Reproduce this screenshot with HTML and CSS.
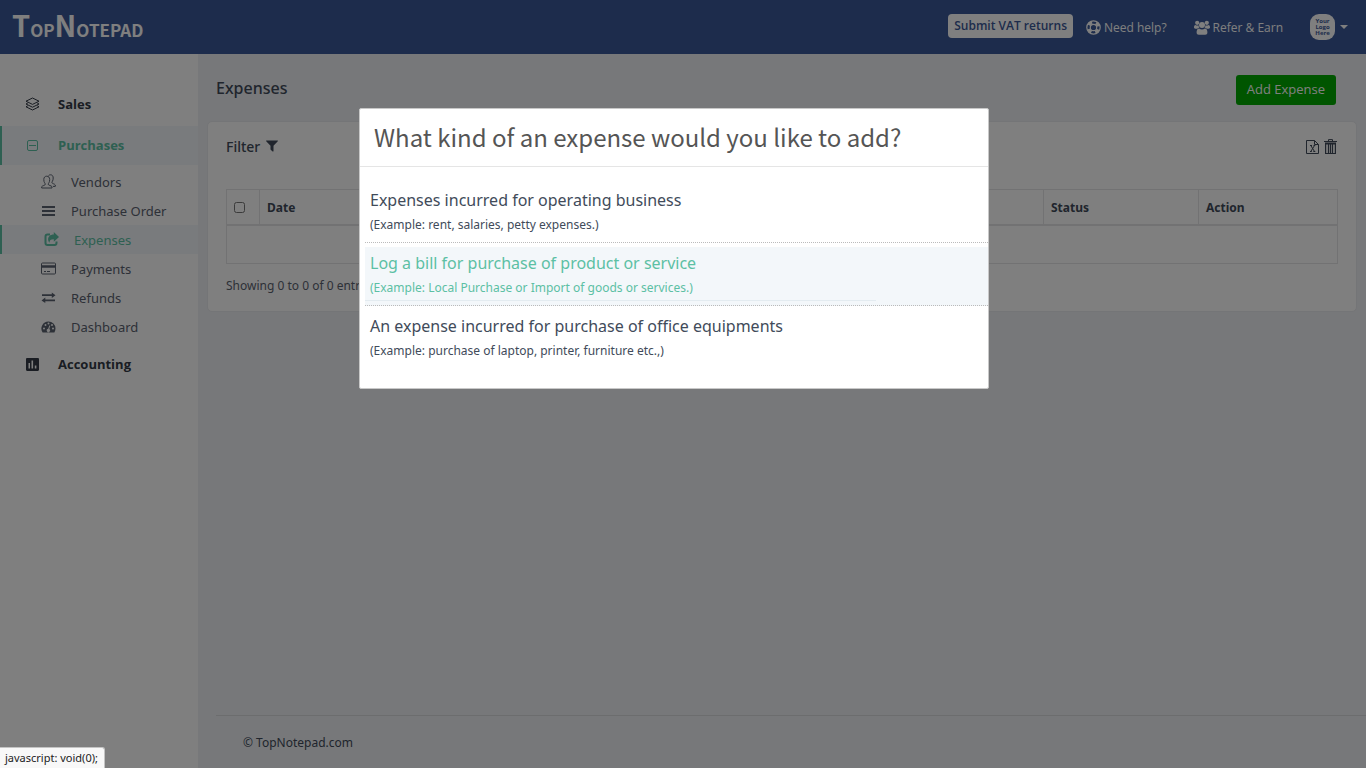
FILE: index.html
```
<!DOCTYPE html>
<html lang="en">
<head>
  <meta charset="UTF-8" />
  <meta name="viewport" content="width=device-width, initial-scale=1.0"/>
  <title>TopNotepad - Expenses</title>
  <link rel="stylesheet" href="styles.css">
</head>
<body>
  <header class="topbar">
    <a href="#" class="logo"><span class="big">T</span>OP<span class="big">N</span>OTEPAD</a>
    <nav class="topnav">
      <button class="btn-vat">Submit VAT returns</button>
      <a href="#" class="help">
        <svg width="15" height="15" viewBox="0 0 15 15" fill="none" stroke="currentColor"><circle cx="7.5" cy="7.5" r="6.7" stroke-width="1.2"/><circle cx="7.5" cy="7.5" r="3.2" stroke-width="1.2"/><circle cx="7.5" cy="7.5" r="5" stroke-width="3.4" stroke-dasharray="3.9 3.95" stroke-dashoffset="5.9"/></svg>
        Need help?</a>
      <a href="#" class="refer">
        <svg width="16" height="15" viewBox="0 0 16 15" fill="currentColor"><circle cx="3.2" cy="2.8" r="2.1"/><circle cx="12.8" cy="2.8" r="2.1"/><circle cx="8" cy="4.9" r="3"/><path d="M0 7.6C0 6 .5 5 1.4 5c.8.6 2.2.8 3.1.3.1 1 .3 1.7.9 2.4-1 0-1.7.4-2.2 1H1.4C.5 8.700 0 8.300 0 7.600zM16 7.600C16 6 15.500 5 14.600 5c-.8.6-2.200.8-3.100.3-.1 1-.3 1.700-.9 2.400 1 0 1.700.4 2.200 1h1.800c.9 0 1.400-.4 1.400-1.100zM2.600 12.600c0-2.500.6-4.200 2.500-4.200 1.700 1.400 4.100 1.400 5.800 0 1.900 0 2.500 1.700 2.500 4.200 0 1.500-.9 2.200-2.200 2.200H4.800c-1.300 0-2.200-.7-2.200-2.200z"/></svg>
        Refer &amp; Earn</a>
      <button class="profile" aria-label="Account">
        <span class="avatar">Your<br>Logo<br>Here</span>
        <span class="caret"></span>
      </button>
    </nav>
  </header>

  <div class="layout">
    <aside class="sidebar">
      <a href="#" class="menu-item">
        <svg width="15" height="15" viewBox="0 0 15 15" fill="none" stroke="currentColor"><path d="M7.500 1 14 4.200 7.500 7.400 1 4.200zM2.800 6 1 7l6.500 3.200L14 7l-1.800-1M2.800 8.800 1 9.800 7.500 13 14 9.800l-1.800-1"/></svg>
        Sales</a>
      <a href="#" class="menu-item active">
        <svg width="15" height="15" viewBox="0 0 15 15" fill="none" stroke="currentColor"><rect x="2.500" y="2.500" width="10" height="10" rx="1.500"/><path d="M4 7.500h7"/></svg>
        Purchases</a>
      <div class="submenu">
        <a href="#">
          <svg width="15" height="15" viewBox="0 0 15 15" fill="none" stroke="currentColor"><path d="M.7 14v-1.300c.7-1.200 3.600-1.200 3.600-2.500 0-.9-1.500-1.500-1.500-4.700 0-2 1-3.300 2.900-3.300s3 1.300 3 3.300c0 3.200-1.500 3.800-1.500 4.700 0 1.300 3.200 1.300 3.800 2.500V14zM7.500 1.700c.5-.6 1.200-.9 2-.9 1.800 0 2.700 1.300 2.700 3.200 0 3-1.300 3.600-1.300 4.500 0 1.200 2.900 1.300 3.400 2.500v1.400H12"/></svg>
          Vendors</a>
        <a href="#">
          <svg width="15" height="15" viewBox="0 0 15 15" fill="currentColor"><path d="M1 3h13v2H1zM1 7h13v2H1zM1 11h13v2H1z"/></svg>
          Purchase Order</a>
        <a href="#" class="active">
          <svg width="15" height="15" viewBox="0 0 15 15" fill="none" stroke="currentColor" stroke-width="2"><path d="M6 2.500H3.500c-1.300 0-2 .8-2 2v6.500c0 1.300.7 2 2 2h7c1.300 0 2-.7 2-2V9.500"/><path d="M9.800 0v2.400C6 2.400 4.100 4.600 4.100 7.300c0 1.500.6 2.600 1.500 3.500-.2-2.500.9-3.600 4.200-3.600v2.500L15 4.900z" fill="currentColor" stroke="none"/></svg>
          Expenses</a>
        <a href="#">
          <svg width="15" height="15" viewBox="0 0 15 15" fill="none" stroke="currentColor"><rect x=".5" y="2" width="14" height="11" rx="1"/><path d="M1 5.500h13" stroke-width="2.500"/><path d="M3 10.500h2m1 0h3"/></svg>
          Payments</a>
        <a href="#">
          <svg width="15" height="15" viewBox="0 0 15 15" fill="currentColor"><path d="M1 4.200h9.800V2.400l3.700 2.800-3.700 2.700V6.100H1zM14 11.300H4.300v1.800L.5 10.400l3.800-2.800v1.900H14z"/></svg>
          Refunds</a>
        <a href="#">
          <svg width="15" height="15" viewBox="0 0 15 15" fill="currentColor"><path fill-rule="evenodd" d="M7.500 2.500a7 7 0 0 1 7 7c0 1.500-.4 2.700-1.100 3.900H1.600A7 7 0 0 1 7.500 2.500zM2 9.500a1 1 0 1 0 2 0 1 1 0 1 0-2 0M3.500 6a1 1 0 1 0 2 0 1 1 0 1 0-2 0M6.500 4.500a1 1 0 1 0 2 0 1 1 0 1 0-2 0M10 6a1 1 0 1 0 2 0 1 1 0 1 0-2 0M11 9.500a1 1 0 1 0 2 0 1 1 0 1 0-2 0M8.300 6.400l-1.100 3.400a1.600 1.600 0 1 0 1.100.3l1-3.500z"/></svg>
          Dashboard</a>
      </div>
      <a href="#" class="menu-item">
        <svg width="15" height="15" viewBox="0 0 15 15" fill="currentColor"><path fill-rule="evenodd" d="M2.200 1h10.600c.7 0 1.200.5 1.200 1.200v10.600c0 .7-.5 1.200-1.200 1.200H2.200c-.7 0-1.200-.5-1.200-1.200V2.200C1 1.500 1.500 1 2.200 1zM3.500 6v5.500H5V6zM6.500 3.500v8h1.600v-8zM9.800 8.500v3h1.600v-3z"/></svg>
        Accounting</a>
    </aside>

    <main class="content">
      <div class="page-head">
        <h1>Expenses</h1>
        <button class="btn-add">Add Expense</button>
      </div>

      <section class="card">
        <div class="card-tools">
          <button class="filter">Filter
            <svg width="12" height="12" viewBox="0 0 12 12" fill="currentColor"><path d="M.5.500h11c.4 0 .5.5.3.8L7.500 5.800V11c0 .6-.5.8-.9.400L4.700 9.700c-.2-.2-.2-.3-.2-.6V5.800L.2 1.300C0 1 .1.500.5.500z"/></svg>
          </button>
          <div class="exports">
            <button aria-label="Export to Excel">
              <svg width="13" height="15" viewBox="0 0 13 15" fill="none" stroke="currentColor"><path d="M.5 1.500h8l4 4v9H.5zM8.500 1.500v4h4"/><path d="M4 6.500h2M7.500 6.500h1.800M4 12.500h1.800M7.300 12.500h2M4.800 6.500l3.700 6M8.500 6.500l-3.700 6"/></svg>
            </button>
            <button aria-label="Delete">
              <svg width="13" height="15" viewBox="0 0 13 15" fill="none" stroke="currentColor"><path d="M4.500 2V.600h4V2"/><path d="M0 2.500h13"/><path d="M1 4.500h11" stroke-width="2"/><path d="M1.600 4v10.500h9.800V4M4.500 5v9M6.500 5v9M8.500 5v9" stroke-width="1.200"/></svg>
            </button>
          </div>
        </div>
        <table>
          <thead>
            <tr>
              <th class="col-check"><input type="checkbox" aria-label="Select all"></th>
              <th>Date</th>
              <th class="col-status">Status</th>
              <th class="col-action">Action</th>
            </tr>
          </thead>
          <tbody>
            <tr><td colspan="4"></td></tr>
          </tbody>
        </table>
        <p class="info">Showing 0 to 0 of 0 entries</p>
      </section>

      <footer class="footer">© TopNotepad.com</footer>
    </main>
  </div>

  <div class="overlay">
    <div class="modal" role="dialog" aria-labelledby="modalTitle">
      <h2 id="modalTitle">What kind of an expense would you like to add?</h2>
      <div class="options">
        <a href="#" class="option">
          <span class="name">Expenses incurred for operating business</span>
          <span class="hint">(Example: rent, salaries, petty expenses.)</span>
        </a>
        <a href="#" class="option selected">
          <span class="name">Log a bill for purchase of product or service</span>
          <span class="hint">(Example: Local Purchase or Import of goods or services.)</span>
        </a>
        <a href="#" class="option">
          <span class="name">An expense incurred for purchase of office equipments</span>
          <span class="hint">(Example: purchase of laptop, printer, furniture etc.,)</span>
        </a>
      </div>
    </div>
  </div>
  <div class="status">javascript: void(0);</div>
</body>
</html>
```

FILE: styles.css
```
:root {
  --blue: #3b5998;
  --bg: #eef0f4;
  --text: #414b5a;
  --green: #5cc0a4;
  --hover: #f3f7fa;
  --line: #e4e5e7;
}
* {
  box-sizing: border-box;
}
body {
  margin: 0;
  min-height: 100vh;
  display: flex;
  flex-direction: column;
  font-family: "Noto Sans", sans-serif;
  font-size: 13px;
  color: var(--text);
  background: var(--bg);
}
a {
  color: inherit;
  text-decoration: none;
}
button {
  font: inherit;
  color: inherit;
  border: 0;
  background: none;
  padding: 0;
  cursor: pointer;
}
svg {
  display: block;
  flex: none;
}

/* top bar */
.topbar {
  height: 54px;
  background: var(--blue);
  color: #fff;
  display: flex;
  justify-content: space-between;
  padding: 0 18px 0 12px;
}
.logo {
  font-family: "Noto Sans CJK SC", sans-serif;
  font-weight: bold;
  font-size: 17px;
  line-height: 48px;
}
.logo .big {
  font-size: 29px;
}
.topnav {
  display: flex;
  align-items: center;
  font-family: "Open Sans", sans-serif;
  font-size: 12px;
  font-weight: 500;
}
.topnav a {
  display: flex;
  align-items: center;
  gap: 3px;
}
.btn-vat {
  height: 24px;
  padding: 0 6px 1px;
  margin-bottom: 2px;
  border-radius: 4px;
  background: #fff;
  color: var(--blue);
  font-weight: 600;
}
.help {
  margin-left: 13px;
}
.refer {
  margin-left: 27px;
}
.profile {
  display: flex;
  align-items: center;
  gap: 5px;
  margin-left: 27px;
}
.avatar {
  width: 25px;
  height: 26px;
  padding-top: 4px;
  border-radius: 9px;
  background: #fff;
  color: var(--blue);
  font-size: 6px;
  font-weight: bold;
  line-height: 6px;
}
.caret {
  border: 4px solid transparent;
  border-top-color: #fff;
  border-bottom: 0;
}

/* sidebar */
.layout {
  flex: 1;
  display: flex;
}
.sidebar {
  width: 198px;
  padding-top: 31px;
  background: #fff;
}
.menu-item {
  display: flex;
  align-items: center;
  gap: 18px;
  height: 39px;
  margin-bottom: 2px;
  padding: 0 0 1px 23px;
  border-left: 2px solid transparent;
  font-family: "Open Sans", sans-serif;
  font-weight: bold;
  color: #343b47;
}
.menu-item.active,
.submenu .active {
  color: var(--green);
  background: var(--hover);
  border-left-color: var(--green);
}
.submenu {
  padding-bottom: 4px;
}
.submenu a {
  display: flex;
  align-items: center;
  gap: 15px;
  height: 29px;
  padding-left: 39px;
  border-left: 2px solid transparent;
  color: #5b6270;
}
.submenu .active {
  padding-left: 42px;
}

/* content */
.content {
  flex: 1;
  display: flex;
  flex-direction: column;
  padding: 21px 9px 0;
}
.page-head {
  display: flex;
  justify-content: space-between;
  align-items: flex-start;
  padding: 0 21px 16px 9px;
}
h1 {
  margin: 0;
  font-size: 16px;
  font-weight: 500;
  line-height: 26px;
}
.btn-add {
  height: 30px;
  padding: 0 11px 2px;
  border-radius: 3px;
  background: #0a0;
  color: #fff;
  font-family: "Open Sans", sans-serif;
  font-weight: 500;
}
.card {
  padding: 13px 18px 16px;
  background: #fff;
  border: 1px solid #e8eaee;
  border-radius: 5px;
}
.card-tools {
  display: flex;
  justify-content: space-between;
  height: 54px;
}
.filter {
  display: flex;
  align-items: center;
  gap: 6px;
  height: 22px;
  font-size: 14px;
  font-weight: 500;
}
.exports {
  display: flex;
  align-items: center;
  gap: 5px;
  height: 22px;
  padding-right: 1px;
}
table {
  width: 100%;
  border-collapse: collapse;
  table-layout: fixed;
}
th,
td {
  border: 1px solid var(--line);
}
th {
  height: 35px;
  padding: 1px 7px 0;
  border-bottom-width: 2px;
  text-align: left;
  font-size: 12px;
  font-weight: bold;
}
td {
  height: 39px;
}
th input {
  display: block;
  width: 11px;
  height: 11px;
  margin: 0;
}
.col-check {
  width: 33px;
}
.col-status {
  width: 155px;
}
.col-action {
  width: 139px;
}
.info {
  margin: 13px 0 0;
  font-size: 12px;
  line-height: 18px;
  color: #5b6270;
}
.footer {
  margin: auto -9px 0 9px;
  padding: 18px 27px 17px;
  border-top: 1px solid #d8dadd;
  font-size: 12px;
  line-height: 17px;
}

/* modal */
.overlay {
  position: fixed;
  inset: 0;
  padding: 108px 18px 0 0;
  background: rgba(0, 0, 0, 0.5);
}
.modal {
  width: 630px;
  max-width: 95%;
  margin: 0 auto;
  background: #fff;
  border: 1px solid #c8c8c8;
  border-radius: 2px;
}
h2 {
  margin: 0;
  padding: 0 14px 1px;
  border-bottom: 1px solid #e5e5e5;
  font-family: "Noto Sans CJK SC", sans-serif;
  font-size: 24px;
  font-weight: normal;
  line-height: 56px;
  color: #555;
}
.options {
  display: flex;
  flex-direction: column;
  gap: 4px;
  padding: 17px 0 19px 5px;
}
.option {
  border-bottom: 1px dotted #bbb;
  padding-bottom: 4px;
}
.option:last-child {
  border-bottom-color: transparent;
}
.option.selected {
  color: var(--green);
  background: var(--hover);
}
.option span {
  display: block;
  padding-left: 5px;
}
.option .name {
  font-size: 16px;
  line-height: 32px;
}
.option .hint {
  width: 82%;
  padding-bottom: 4px;
  border-bottom: 1px solid transparent;
  font-size: 12px;
  line-height: 17px;
}
.option.selected .hint {
  border-bottom-color: #e3ebf0;
}

/* link preview */
.status {
  position: fixed;
  left: 0;
  bottom: 0;
  padding: 0 6px 0 5px;
  border: 1px solid #c4c4c4;
  border-width: 1px 1px 0 0;
  border-radius: 0 3px 0 0;
  background: #f8f8f8;
  color: #222;
  font-size: 11px;
  line-height: 20px;
}
```
